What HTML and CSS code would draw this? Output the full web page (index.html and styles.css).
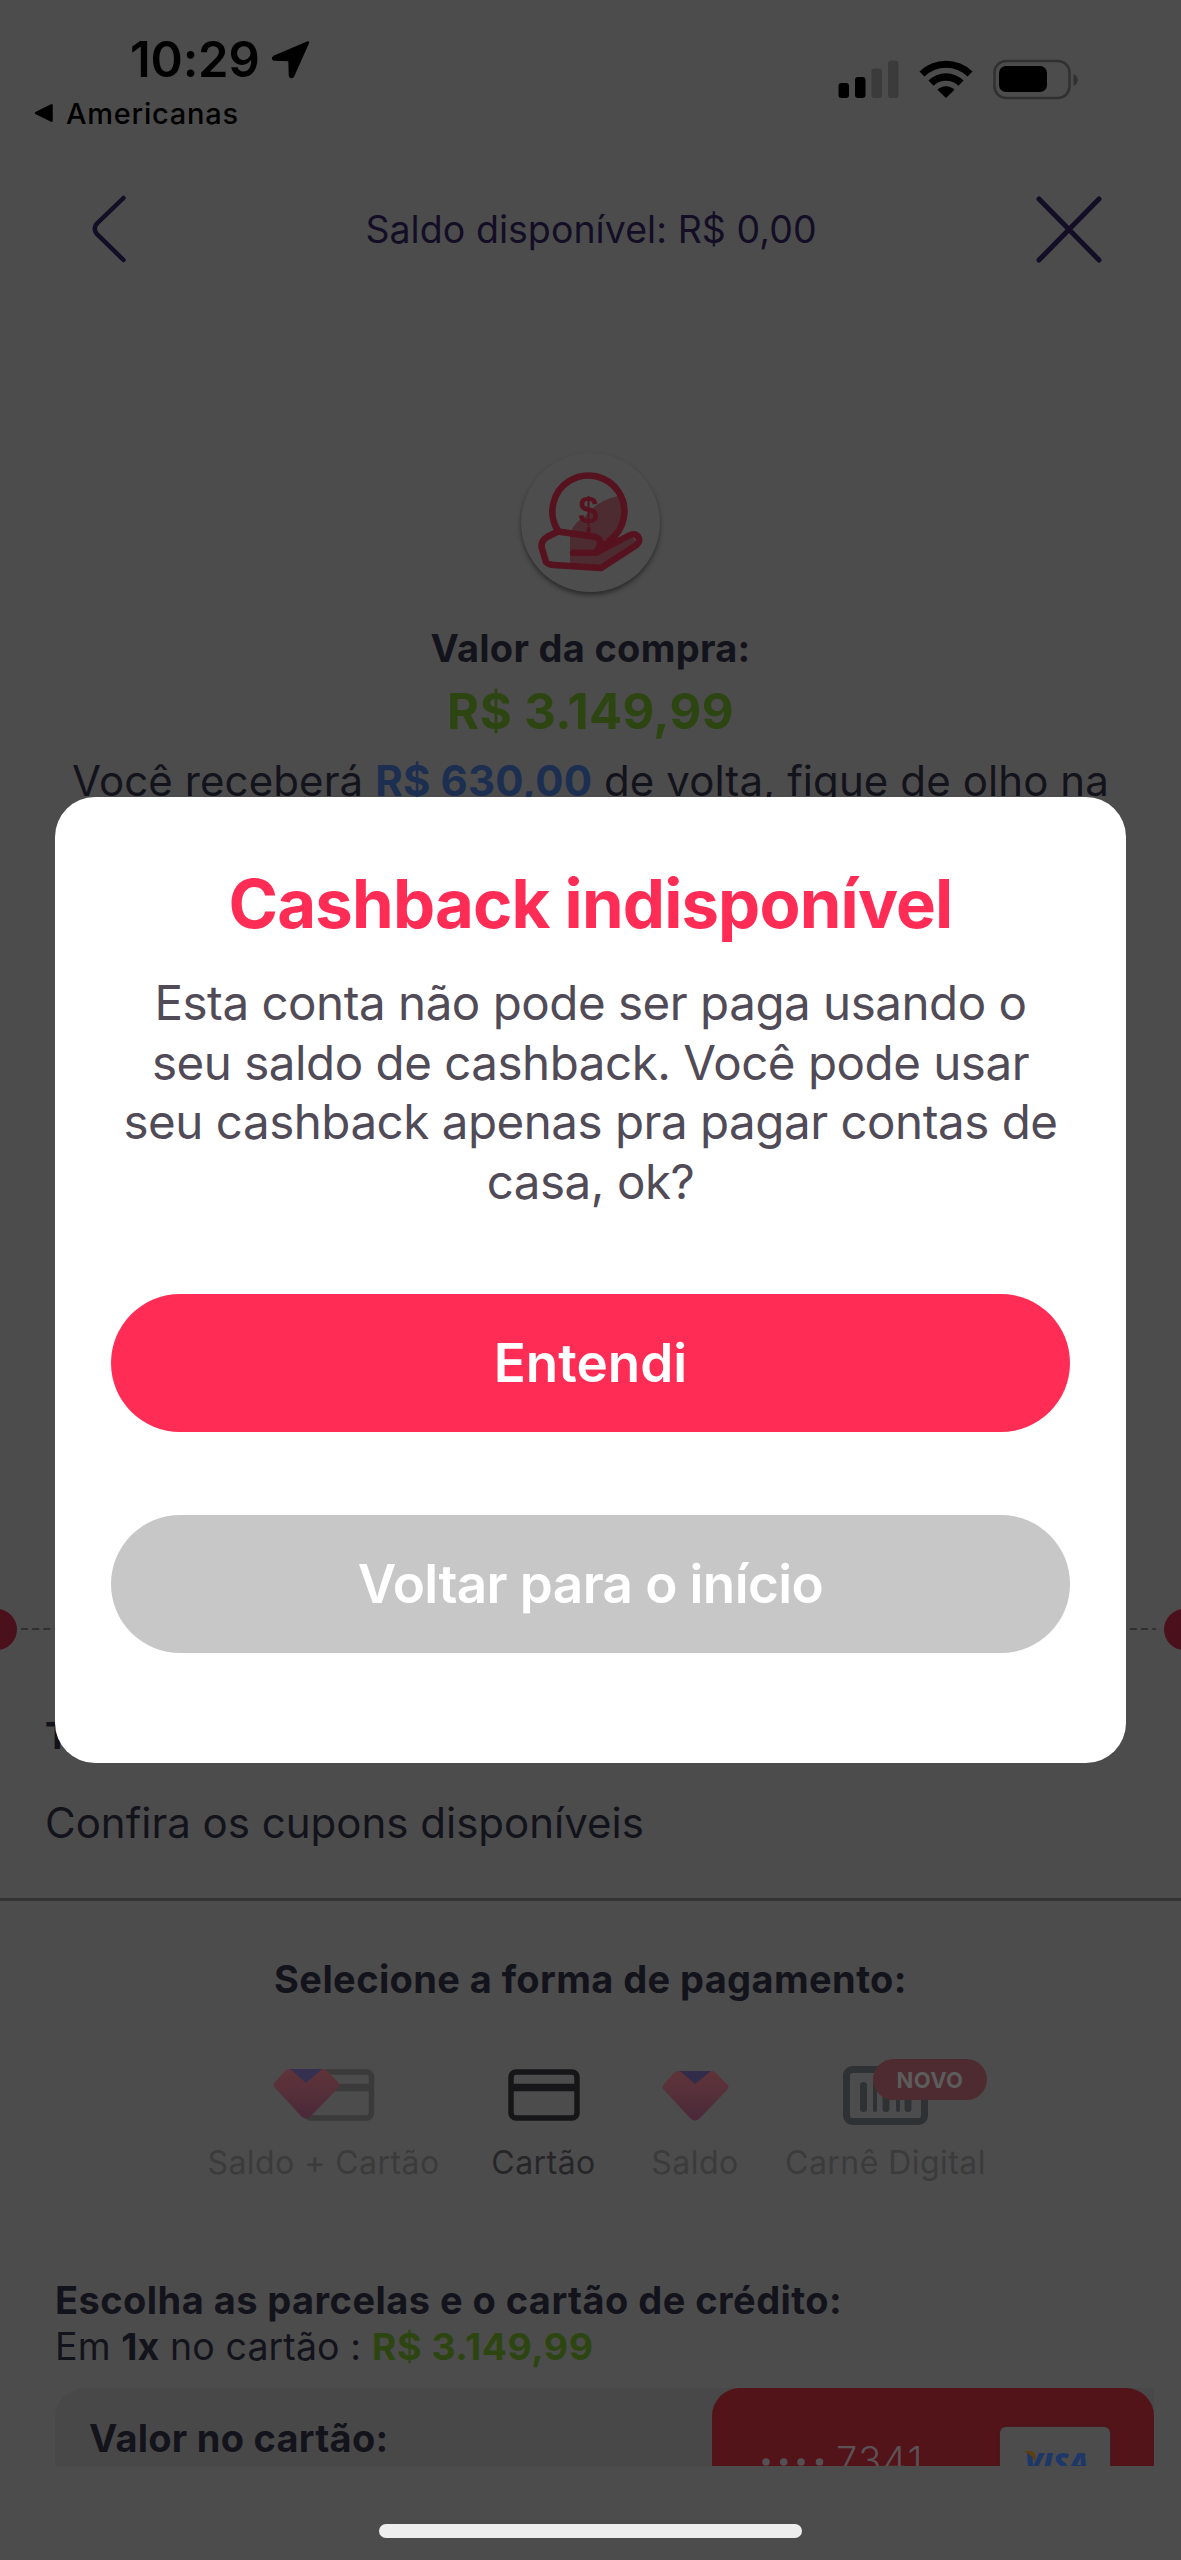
FILE: index.html
```html
<!DOCTYPE html>
<html lang="pt-BR">
<head>
<meta charset="utf-8">
<title>Pagamento</title>
<link rel="stylesheet" href="styles.css">
</head>
<body>
<div class="screen">
  <div class="status">
    <div class="status-left">
      <div class="clock"><span class="time">10:29</span>
        <svg width="40" height="40" viewBox="0 0 40 40"><path d="M37 2.500 L3 17 C1.500 17.800 1.800 19.500 3.500 19.600 L18.500 20 L19 35.500 C19.200 37.500 21.200 37.600 22 36 Z" fill="#000" stroke="#000" stroke-width="2.500" stroke-linejoin="round"/></svg>
      </div>
      <div class="back-app"><svg width="20" height="20" viewBox="0 0 20 20"><path d="M2 10 L17.500 2.300 V17.700 Z" fill="#000" stroke="#000" stroke-width="2.500" stroke-linejoin="round"/></svg><span>Americanas</span></div>
    </div>
    <div class="status-right">
      <svg width="61" height="40" viewBox="0 0 61 40"><rect x="0.500" y="24" width="10.500" height="15" rx="3"/><rect x="17" y="18" width="10.500" height="21" rx="3"/><g fill="#3b3b3b"><rect x="33.500" y="9.500" width="10.500" height="29.500" rx="3"/><rect x="50" y="1.500" width="10.500" height="37.500" rx="3"/></g></svg>
      <svg class="wifi" width="54" height="40" viewBox="0 0 54 40"><path d="M0.500 12.500 A38 38 0 0 1 53.500 12.500 L48.500 17.500 A31 31 0 0 0 5.500 17.500 Z"/><path d="M9.500 21.500 A25 25 0 0 1 44.500 21.500 L39.500 26.700 A18 18 0 0 0 14.500 26.700 Z"/><path d="M18.500 30.800 A12 12 0 0 1 35.500 30.800 L27 39 Z"/></svg>
      <svg width="86" height="42" viewBox="0 0 86 42"><rect x="1.500" y="2" width="75" height="37" rx="11.500" fill="none" stroke="#303030" stroke-width="2.500"/><rect x="6" y="7" width="48" height="26" rx="7"/><path d="M80.500 15 C86 17 86 25 80.500 27 Z" fill="#303030"/></svg>
    </div>
  </div>

  <header class="header">
    <svg width="66" height="68" viewBox="0 0 66 68"><path d="M31.500 3 L4.500 29 Q1 33.500 4.500 38.500 L31.500 65" fill="none" stroke="#130e25" stroke-width="4.500" stroke-linecap="round"/></svg>
    <span class="balance">Saldo disponível: R$ 0,00</span>
    <svg width="66" height="67" viewBox="0 0 66 67"><path d="M3 3 L63 64 M63 3 L3 64" fill="none" stroke="#130e25" stroke-width="5" stroke-linecap="round"/></svg>
  </header>

  <section class="summary">
    <div class="coin">
      <svg width="139" height="139" viewBox="0 0 139 139"><path d="M97 43 A36 36 0 0 1 89 87 L110 81 L116 91 L80 115 L49 111 L49 80 Q55 67 63 65 Q74 48 97 43 Z" fill="#4c2c31"/><g fill="none" stroke="#56121e" stroke-width="6.500" stroke-linejoin="round" stroke-linecap="round"><path d="M36.500 77 A36 36 0 1 1 88 88"/><path d="M52 99.700 H74 Q77 98 79.500 90 Q79 85 73.300 83.700 L37 78.500 L26 84 Q20 88 20.500 94 L25 109 Q28 112 33 112 L80 115 L115.500 92 Q120 88 117 83.500 Q113.500 79.500 108 82.500 L76 99.500"/></g><path d="M80 88 L92 88 L80 97 Z" fill="#56121e"/><path d="M67.500 74 V82" stroke="#56121e" stroke-width="4"/></svg>
      <span class="dollar">$</span>
    </div>
    <div class="sum-label">Valor da compra:</div>
    <div class="sum-value">R$ 3.149,99</div>
    <div class="sum-note">Você receberá <b>R$ 630,00</b> de volta, fique de olho na</div>
  </section>

  <div class="tear"><i class="notch"></i><svg width="1141" height="4" viewBox="0 0 1141 4"><path d="M1 2 H1136" stroke="#303030" stroke-width="2" stroke-dasharray="7 4.200"/></svg><i class="notch"></i></div>

  <section class="coupon">
    <div class="coupon-title">T</div>
    <div class="coupon-link">Confira os cupons disponíveis</div>
  </section>

  <section class="pay">
    <h2 class="pay-title">Selecione a forma de pagamento:</h2>
    <div class="options">
      <div class="option opt-mix">
        <svg width="102" height="66" viewBox="0 0 102 66"><defs><linearGradient id="gem" x1="0" y1="0" x2="0" y2="1"><stop offset="0" stop-color="#603339"/><stop offset=".5" stop-color="#55303a"/><stop offset="1" stop-color="#4a2839"/></linearGradient></defs><g fill="none" stroke="#3a3a3b" stroke-width="5.500"><rect x="33" y="13" width="65.500" height="46" rx="5"/><path d="M33 28.500 H99" stroke-width="7.500"/></g><path d="M16 10 H50 Q52 10 54 12 L65 23 Q68 26 65 29 L38 57 Q33 62 28 57 L2 29 Q-1 26 2 23 L12 12 Q14 10 16 10Z" fill="url(#gem)"/><path d="M17 10 H49 L33 24 Z" fill="#35304f"/></svg>
        <span>Saldo + Cartão</span>
      </div>
      <div class="option opt-card">
        <svg width="72" height="66" viewBox="0 0 72 66"><g fill="none" stroke="#161619" stroke-width="5.500"><rect x="3" y="13" width="66" height="46" rx="5"/><path d="M3 28.500 H69" stroke-width="7.500"/></g></svg>
        <span>Cartão</span>
      </div>
      <div class="option opt-balance">
        <svg width="67" height="66" viewBox="0 0 67 66"><path d="M16 12 H50 Q52 12 54 14 L65 25 Q68 28 65 31 L38 59 Q33 64 28 59 L2 31 Q-1 28 2 25 L12 14 Q14 12 16 12Z" fill="url(#gem)"/><path d="M18 12 H49 L33 25 Z" fill="#302c4a"/></svg>
        <span>Saldo</span>
      </div>
      <div class="option opt-carne">
        <div class="carne-icon"><svg width="85" height="66" viewBox="0 0 85 66"><rect x="3.500" y="10.500" width="78" height="52" rx="6" fill="none" stroke="#2e3234" stroke-width="7"/><g fill="#2e3234"><rect x="17" y="23" width="7" height="30" rx="3.500"/><rect x="30" y="23" width="4" height="30" rx="2"/><rect x="39.500" y="23" width="7" height="30" rx="3.500"/><rect x="53" y="23" width="4" height="30" rx="2"/><rect x="61.500" y="23" width="7" height="30" rx="3.500"/></g></svg><b class="badge">NOVO</b></div>
        <span>Carnê Digital</span>
      </div>
    </div>
  </section>

  <section class="installments">
    <div class="inst-title">Escolha as parcelas e o cartão de crédito:</div>
    <div class="inst-line">Em <b>1x</b> no cartão : <b class="green">R$ 3.149,99</b></div>
    <div class="card-row">
      <div class="card-value">Valor no cartão:</div>
      <div class="credit-card">
        <svg width="62" height="10" viewBox="0 0 62 10"><g fill="#555053"><circle cx="4" cy="5" r="3.800"/><circle cx="21.700" cy="5" r="3.800"/><circle cx="39" cy="5" r="3.800"/><circle cx="57.500" cy="5" r="3.800"/></g></svg>
        <span class="digits">7341</span>
        <div class="brand"><svg class="swoosh" width="14" height="12" viewBox="0 0 14 12"><path d="M0 0 H7 Q11 0 12 4 L13 11 Q8 3 0 0Z" fill="#5e3e0c"/></svg><span>VISA</span></div>
      </div>
    </div>
  </section>
  <div class="home"></div>

  <div class="modal-layer">
    <div class="modal">
      <h1 class="modal-title">Cashback indisponível</h1>
      <p class="modal-text">Esta conta não pode ser paga usando o<br>seu saldo de cashback. Você pode usar<br>seu cashback apenas pra pagar contas de<br>casa, ok?</p>
      <button class="btn primary">Entendi</button>
      <button class="btn secondary">Voltar para o início</button>
    </div>
  </div>
</div>
</body>
</html>
```
FILE: styles.css
```css
* { box-sizing: border-box; }
body { margin: 0; font-family: Inter, "Liberation Sans", sans-serif; }
svg { display: block; flex: none; }
.screen { position: relative; width: 1181px; height: 2560px; overflow: hidden; background: #4c4c4c; color: #13131b; white-space: nowrap; display: flex; flex-direction: column; }

.status { height: 150px; display: flex; justify-content: space-between; padding: 30px 102px 0 34px; }
.clock { display: flex; align-items: center; gap: 11px; height: 60px; padding-left: 96px; font-size: 49px; line-height: 60px; font-weight: 600; letter-spacing: -0.2px; color: #000; }
.back-app { display: flex; align-items: center; gap: 12px; height: 46px; font-size: 29px; font-weight: 500; letter-spacing: 0.75px; color: #000; }
.status-right { display: flex; gap: 20px; padding-top: 29px; }

.header { height: 160px; display: flex; align-items: center; justify-content: space-between; padding: 0 79px 2px 92px; }
.balance { position: relative; left: -6px; font-size: 37.500px; letter-spacing: 0.05px; color: #130e25; }

.summary { height: 1298px; padding-top: 143px; text-align: center; display: flex; flex-direction: column; align-items: center; }
.coin { position: relative; width: 139px; height: 139px; border-radius: 50%; background: #4d4d4d; box-shadow: 0 3px 4px #2c2c2c; }
.dollar { position: absolute; left: 0; width: 135px; top: 34px; line-height: 48px; font-size: 36px; font-family: "Liberation Sans", sans-serif; font-weight: 700; color: #56121e; }
.sum-label { margin-top: 31px; line-height: 50px; font-size: 38px; font-weight: 700; letter-spacing: 0.3px; }
.sum-value { margin-top: 11px; line-height: 56px; font-size: 49px; font-weight: 700; letter-spacing: 0.4px; color: #2d4611; }
.sum-note { margin-top: 11px; line-height: 60px; font-size: 42px; letter-spacing: 0.1px; }
.sum-note b { font-weight: 700; color: #1c2f50; }

.tear { height: 42px; display: flex; align-items: center; justify-content: space-between; margin: 0 -24px; }
.notch { width: 41px; height: 41px; border-radius: 50%; background: #4a101c; flex: none; }

.coupon { height: 251px; padding: 61px 0 0 45px; border-bottom: 3px solid #333; }
.coupon-title { line-height: 50px; font-size: 37px; font-weight: 700; }
.coupon-link { margin-top: 32px; line-height: 60px; font-size: 42px; }

.pay { padding-top: 53px; height: 374px; }
.pay-title { margin: 0; text-align: center; font-size: 38px; line-height: 50px; font-weight: 700; letter-spacing: 0.4px; }
.options { display: flex; margin-top: 55px; padding-left: 208px; color: #3b3b3c; }
.option { display: flex; flex-direction: column; align-items: center; font-size: 32px; line-height: 40px; gap: 18px; letter-spacing: 0.45px; }
.opt-mix { width: 231px; }
.opt-card { width: 105px; margin-left: 52px; color: #262629; }
.opt-balance { width: 88px; margin-left: 55px; }
.opt-carne { width: 201px; margin-left: 46px; }
.carne-icon { position: relative; }
.badge { position: absolute; left: 30px; top: 0; width: 114px; height: 41px; border-radius: 21px; background: #4d2b31; color: #5c5c5c; font-size: 22px; line-height: 43px; text-align: center; letter-spacing: 0.4px; }

.installments { padding: 0 27px 0 55px; height: 191px; overflow: hidden; }
.inst-title { line-height: 48px; font-size: 38px; font-weight: 700; letter-spacing: 0.45px; margin-top: 1px; }
.inst-line { line-height: 46px; font-size: 37.500px; letter-spacing: 0.1px; }
.inst-line b { font-weight: 700; }
.inst-line .green { color: #2d4611; letter-spacing: 0.5px; }
.card-row { display: flex; justify-content: space-between; height: 78px; margin-top: 18px; background: #484848; border-radius: 30px 0 0 0; }
.card-value { padding: 26px 0 0 34px; font-size: 38px; line-height: 48px; font-weight: 700; letter-spacing: 0.25px; }
.credit-card { width: 442px; height: 78px; overflow: hidden; border-radius: 28px 28px 0 0; background: #521319; display: flex; align-items: flex-start; padding: 39px 44px 0 50px; color: #5b5255; }
.credit-card > svg { margin-top: 30px; }
.digits { margin-left: 12px; font-size: 38px; line-height: 66px; letter-spacing: 1.5px; font-weight: 300; }
.brand { margin-left: auto; width: 110px; height: 74px; border-radius: 6px; background: #4c4c4c; box-shadow: 0 0 2px #333; display: flex; justify-content: center; position: relative; font: italic 800 29px/30px "Open Sans", sans-serif; color: #1c3768; padding: 20px 0 0 3px; }
.swoosh { position: absolute; left: 23px; top: 24px; }
.home { width: 423px; height: 14px; border-radius: 7px; background: #eee; margin: 58px auto 0; }

.modal-layer { position: absolute; inset: 0; display: flex; align-items: center; justify-content: center; }
.modal { width: 1071px; height: 966px; border-radius: 40px; background: #fff; padding: 67px 56px 0; text-align: center; }
.modal-title { margin: 0; font-size: 67px; line-height: 80px; font-weight: 700; letter-spacing: -0.85px; color: #ff2d55; }
.modal-text { margin: 29px 0 0; font-size: 47.500px; line-height: 59.700px; letter-spacing: -0.48px; color: #504b57; }
.btn { display: block; width: 959px; height: 138px; border: 0; border-radius: 69px; padding: 0; font: 600 53px/138px Inter, sans-serif; color: #fff; }
.primary { margin-top: 82px; background: #ff2d55; }
.secondary { margin-top: 83px; background: #c7c7c7; letter-spacing: -0.6px; }
```
